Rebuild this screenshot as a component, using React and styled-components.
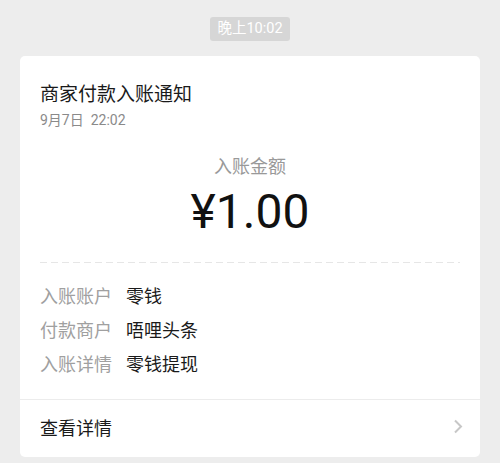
import React from 'react';
import styled, { createGlobalStyle } from 'styled-components';

const GlobalStyle = createGlobalStyle`
  html, body {
    margin: 0;
    padding: 0;
    background: #ededed;
  }
  body {
    font-family: Roboto, "Noto Sans CJK SC", sans-serif;
    -webkit-font-smoothing: antialiased;
  }
`;

const details = [
  { label: '入账账户', value: '零钱' },
  { label: '付款商户', value: '唔哩头条' },
  { label: '入账详情', value: '零钱提现' },
];

export default function App() {
  return (
    <>
      <GlobalStyle />
      <Page>
        <TimeBadge>晚上10:02</TimeBadge>
        <Card>
          <Header>
            <Title>商家付款入账通知</Title>
            <DateText>9月7日&nbsp;&nbsp;22:02</DateText>
          </Header>
          <AmountBlock>
            <AmountLabel>入账金额</AmountLabel>
            <Amount>¥1.00</Amount>
          </AmountBlock>
          <Dashed />
          <DetailList>
            {details.map((d) => (
              <DetailRow key={d.label}>
                <DetailLabel>{d.label}</DetailLabel>
                <DetailValue>{d.value}</DetailValue>
              </DetailRow>
            ))}
          </DetailList>
          <Footer>
            <FooterText>查看详情</FooterText>
            <svg width="10" height="15" viewBox="0 0 10 15">
              <path d="M2 1.5 L8 7.5 L2 13.5" fill="none" stroke="#c7c7c7" strokeWidth="2" />
            </svg>
          </Footer>
        </Card>
      </Page>
    </>
  );
}

const Page = styled.div`
  min-height: 463px;
  padding-top: 17px;
  display: flex;
  flex-direction: column;
  align-items: center;
  box-sizing: border-box;
`;

const TimeBadge = styled.div`
  height: 24px;
  line-height: 24px;
  padding: 0 7px;
  background: #d6d6d6;
  border-radius: 3px;
  color: #fff;
  font-size: 14.5px;
`;

const Card = styled.div`
  align-self: stretch;
  margin: 15px 20px 0;
  background: #fff;
  border-radius: 5px;
`;

const Header = styled.div`
  padding: 26px 20px 0;
`;

const Title = styled.div`
  font-size: 19px;
  line-height: 26px;
  color: #1a1a1a;
`;

const DateText = styled.div`
  margin-top: 2px;
  font-size: 14px;
  line-height: 20px;
  color: #8a8a8a;
`;

const AmountBlock = styled.div`
  padding-top: 25px;
  display: flex;
  flex-direction: column;
  align-items: center;
`;

const AmountLabel = styled.div`
  font-size: 18px;
  line-height: 24px;
  color: #999;
`;

const Amount = styled.div`
  margin-top: 5px;
  font-size: 48px;
  line-height: 56px;
  color: #111;
`;

const Dashed = styled.div`
  margin: 22px 20px 0;
  height: 1px;
  background: repeating-linear-gradient(90deg, #e6e6e6 0 7px, transparent 7px 11px);
`;

const DetailList = styled.div`
  padding: 22px 20px 22px;
  display: flex;
  flex-direction: column;
  gap: 10px;
`;

const DetailRow = styled.div`
  display: flex;
  align-items: center;
  font-size: 18px;
  line-height: 24px;
`;

const DetailLabel = styled.span`
  width: 86px;
  color: #a0a0a0;
`;

const DetailValue = styled.span`
  color: #1a1a1a;
`;

const Footer = styled.div`
  height: 58px;
  padding: 0 17px 4px 20px;
  box-sizing: border-box;
  border-top: 1px solid #ececec;
  display: flex;
  align-items: center;
  justify-content: space-between;
`;

const FooterText = styled.span`
  font-size: 18px;
  color: #1a1a1a;
`;
